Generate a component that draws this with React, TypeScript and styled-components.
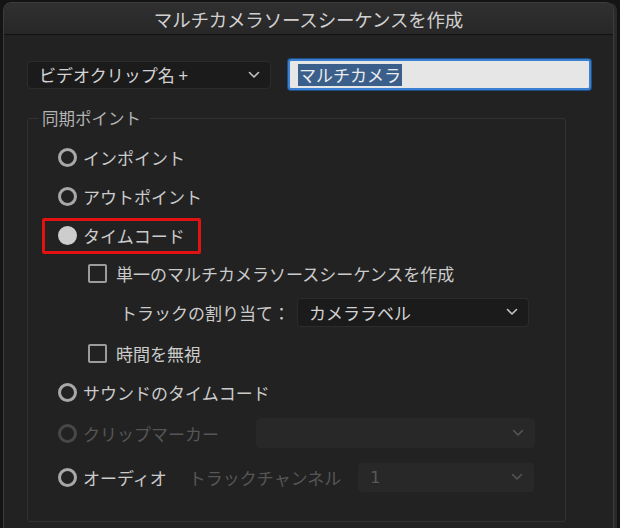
import styled, { createGlobalStyle } from 'styled-components'

const GlobalStyle = createGlobalStyle`
  html, body {
    margin: 0;
    padding: 0;
    background: #141414;
    font-family: "Noto Sans CJK JP", "Noto Sans", sans-serif;
    overflow: hidden;
  }
`

const Chevron = ({ dim }: { dim?: boolean }) => (
  <svg width="12" height="8" viewBox="0 0 12 8">
    <polyline points="1.5,1.5 6,6 10.5,1.5" fill="none" stroke={dim ? '#555' : '#c4c4c4'} strokeWidth="1.6" strokeLinecap="round" strokeLinejoin="round" />
  </svg>
)

const rows = {
  inPoint: 39,
  outPoint: 39,
  timecode: 39,
  single: 36,
  track: 42,
  ignore: 40,
  sound: 39,
  marker: 42,
  audio: 46,
}

const App = () => {
  return (
    <>
      <GlobalStyle />
      <Dialog>
        <TitleBar>マルチカメラソースシーケンスを作成</TitleBar>
        <Body>
          <TopRow>
            <Select width={244} height={28}>
              <span>ビデオクリップ名 +</span>
              <Chevron />
            </Select>
            <NameInput>
              <Selected>マルチカメラ</Selected>
            </NameInput>
          </TopRow>

          <Group>
            <Legend>同期ポイント</Legend>

            <Row h={rows.inPoint}>
              <Radio />
              <Label>インポイント</Label>
            </Row>
            <Row h={rows.outPoint}>
              <Radio />
              <Label>アウトポイント</Label>
            </Row>
            <Row h={rows.timecode}>
              <Highlight>
                <Radio checked />
                <Label>タイムコード</Label>
              </Highlight>
            </Row>
            <Row h={rows.single} indent={30}>
              <Checkbox />
              <Label>単一のマルチカメラソースシーケンスを作成</Label>
            </Row>
            <Row h={rows.track} indent={62}>
              <Label>トラックの割り当て：</Label>
              <Select width={232} height={29} style={{ marginLeft: 7 }}>
                <span>カメララベル</span>
                <Chevron />
              </Select>
            </Row>
            <Row h={rows.ignore} indent={30}>
              <Checkbox />
              <Label>時間を無視</Label>
            </Row>
            <Row h={rows.sound}>
              <Radio />
              <Label>サウンドのタイムコード</Label>
            </Row>
            <Row h={rows.marker}>
              <Radio disabled />
              <Label disabled>クリップマーカー</Label>
              <Select width={279} height={30} disabled style={{ marginLeft: 37 }}>
                <span></span>
                <Chevron dim />
              </Select>
            </Row>
            <Row h={rows.audio}>
              <Radio />
              <Label>オーディオ</Label>
              <Label disabled style={{ marginLeft: 22 }}>トラックチャンネル</Label>
              <Select width={176} height={29} disabled style={{ marginLeft: 17 }}>
                <Num>1</Num>
                <Chevron dim />
              </Select>
            </Row>
          </Group>
        </Body>
      </Dialog>
    </>
  )
}

export default App

const Dialog = styled.div`
  margin: 2px 0 0 3px;
  width: 609px;
  height: 540px;
  background: #222222;
  border: 1px solid #3c3c3c;
  border-radius: 8px 8px 0 0;
  box-shadow: 4px 0 0 -1px #2a2a2a;
  overflow: hidden;
`

const TitleBar = styled.div`
  height: 31px;
  display: flex;
  align-items: center;
  justify-content: center;
  background: linear-gradient(#303030, #272727);
  border-bottom: 1px solid #121212;
  color: #d0d0d0;
  font-size: 18.5px;
  letter-spacing: -0.2px;
`

const Body = styled.div`
  padding: 24px 0 0 23px;
`

const TopRow = styled.div`
  display: flex;
  align-items: center;
  gap: 17px;
  height: 31px;
`

const Select = styled.div<{ width: number; height: number; disabled?: boolean }>`
  width: ${p => p.width}px;
  height: ${p => p.height}px;
  box-sizing: border-box;
  display: flex;
  align-items: center;
  justify-content: space-between;
  padding: 0 10px 0 11px;
  background: ${p => (p.disabled ? '#282828' : '#1b1b1b')};
  border: 1px solid ${p => (p.disabled ? '#282828' : '#2c2c2c')};
  border-radius: 4px;
  color: #d2d2d2;
  font-size: 17px;
`

const NameInput = styled.div`
  width: 303px;
  height: 31px;
  box-sizing: border-box;
  display: flex;
  align-items: center;
  padding: 0 8px;
  background: #e6e6e6;
  border: 2px solid #3a7fd0;
  border-radius: 3px;
  box-shadow: 0 0 0 1px #1f4d85;
`

const Selected = styled.span`
  background: #3b5f8b;
  color: #ececec;
  font-size: 17px;
  line-height: 22px;
  padding: 0 1px;
`

const Group = styled.fieldset`
  margin: 16px 0 0 0;
  width: 539px;
  box-sizing: border-box;
  border: 1px solid #323232;
  border-radius: 3px;
  padding: 8px 0 21px 30px;
`

const Legend = styled.legend`
  margin-left: -19px;
  padding: 0 9px 0 3px;
  font-size: 16.5px;
  line-height: 24px;
  color: #b4b4b4;
`

const Row = styled.div<{ h: number; indent?: number }>`
  height: ${p => p.h}px;
  display: flex;
  align-items: center;
  padding-left: ${p => p.indent ?? 0}px;
`

const Highlight = styled.div`
  display: flex;
  align-items: center;
  height: 36px;
  box-sizing: border-box;
  margin-left: -16px;
  padding: 0 13px 0 13px;
  border: 3px solid #e31212;
  border-radius: 2px;
`

const Radio = styled.span<{ checked?: boolean; disabled?: boolean }>`
  width: 19px;
  height: 19px;
  box-sizing: border-box;
  border-radius: 50%;
  flex-shrink: 0;
  border: 3px solid ${p => (p.disabled ? '#474747' : p.checked ? '#cdcdcd' : '#a8a8a8')};
  background: ${p => (p.checked ? '#cdcdcd' : 'transparent')};
  margin-right: 6px;
`

const Checkbox = styled.span`
  width: 19px;
  height: 19px;
  box-sizing: border-box;
  border: 2px solid #9c9c9c;
  border-radius: 2px;
  flex-shrink: 0;
  margin-right: 9px;
`

const Label = styled.span<{ disabled?: boolean }>`
  font-size: 17px;
  color: ${p => (p.disabled ? '#565656' : '#cbcbcb')};
  white-space: nowrap;
`

const Num = styled.span`
  color: #585858;
  font-family: "DejaVu Sans", sans-serif;
  font-size: 16px;
`
